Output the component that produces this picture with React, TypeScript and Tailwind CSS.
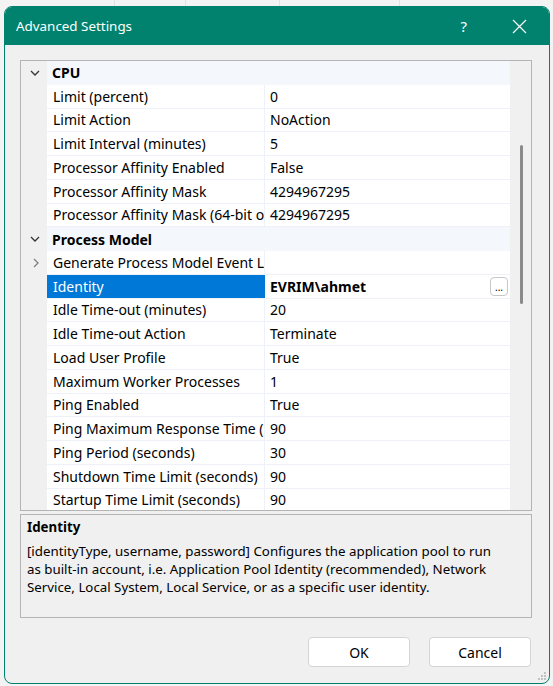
import React from "react";

type Row =
  | { kind: "cat"; name: string }
  | { kind: "prop"; name: string; value: string; expandable?: boolean; selected?: boolean };

const rows: Row[] = [
  { kind: "cat", name: "CPU" },
  { kind: "prop", name: "Limit (percent)", value: "0" },
  { kind: "prop", name: "Limit Action", value: "NoAction" },
  { kind: "prop", name: "Limit Interval (minutes)", value: "5" },
  { kind: "prop", name: "Processor Affinity Enabled", value: "False" },
  { kind: "prop", name: "Processor Affinity Mask", value: "4294967295" },
  { kind: "prop", name: "Processor Affinity Mask (64-bit option)", value: "4294967295" },
  { kind: "cat", name: "Process Model" },
  { kind: "prop", name: "Generate Process Model Event Log Entry", value: "", expandable: true },
  { kind: "prop", name: "Identity", value: "EVRIM\\ahmet", selected: true },
  { kind: "prop", name: "Idle Time-out (minutes)", value: "20" },
  { kind: "prop", name: "Idle Time-out Action", value: "Terminate" },
  { kind: "prop", name: "Load User Profile", value: "True" },
  { kind: "prop", name: "Maximum Worker Processes", value: "1" },
  { kind: "prop", name: "Ping Enabled", value: "True" },
  { kind: "prop", name: "Ping Maximum Response Time (seconds)", value: "90" },
  { kind: "prop", name: "Ping Period (seconds)", value: "30" },
  { kind: "prop", name: "Shutdown Time Limit (seconds)", value: "90" },
  { kind: "prop", name: "Startup Time Limit (seconds)", value: "90" },
];

function ChevronDown() {
  return (
    <svg width="10" height="6" viewBox="0 0 10 6" fill="none">
      <path d="M1 1l4 4 4-4" stroke="#333" strokeWidth="1.3" />
    </svg>
  );
}

function ChevronRight() {
  return (
    <svg width="6" height="10" viewBox="0 0 6 10" fill="none">
      <path d="M1 1l4 4-4 4" stroke="#808080" strokeWidth="1.3" />
    </svg>
  );
}

function GridRow({ row }: { row: Row }) {
  if (row.kind === "cat") {
    return (
      <div className="flex h-[23.75px] items-center">
        <div className="flex h-full w-[26px] shrink-0 items-center justify-center bg-[#f0f0f0] pl-[2px]">
          <ChevronDown />
        </div>
        <div className="flex h-full flex-1 items-center bg-[#f4f7fb] pl-[5px] font-bold text-black">
          {row.name}
        </div>
      </div>
    );
  }
  return (
    <div className="flex h-[23.75px] items-stretch">
      <div className="flex w-[26px] shrink-0 items-center justify-center bg-[#f0f0f0] pl-[3px]">
        {row.expandable && <ChevronRight />}
      </div>
      <div
        className={
          row.selected
            ? "flex w-[218px] shrink-0 items-center overflow-hidden whitespace-nowrap border-b border-[#f0f4f9] bg-[#0078d7] pl-[6px] text-white"
            : "flex w-[218px] shrink-0 items-center overflow-hidden whitespace-nowrap border-b border-r border-[#eef2f8] bg-white pl-[6px] text-black"
        }
      >
        {row.name}
      </div>
      <div className="relative flex flex-1 items-center border-b border-[#eef2f8] bg-white pl-[5px] text-black">
        <span className={row.selected ? "font-bold" : ""}>{row.value}</span>
        {row.selected && (
          <div className="absolute right-[2px] top-[2px] flex h-[19px] w-[18px] items-end justify-center rounded-[4px] border border-[#c8c8c8] bg-white pb-[3px] text-[10px] leading-none">
            ...
          </div>
        )}
      </div>
    </div>
  );
}

export default function App() {
  return (
    <div className="relative h-[686px] w-[553px] overflow-hidden bg-[#f3f3f3] font-['Noto_Sans',sans-serif] text-[14px]">
      <div className="absolute left-0 top-0 flex h-[6px] w-full">
        <div className="w-[115px] border-r border-[#e2e2e2]" />
        <div className="w-[71px] border-r border-[#e2e2e2]" />
        <div className="w-[94px] border-r border-[#e2e2e2]" />
        <div className="w-[120px] border-r border-[#e2e2e2]" />
      </div>
      <div className="ml-[4px] mt-[6px] flex h-[678px] w-[546px] flex-col overflow-hidden rounded-[8px] border border-[#00826f] bg-[#f0f0f0]">
        {/* title bar */}
        <div className="flex h-[38px] shrink-0 items-center bg-[#00826f] pl-[11px] text-white">
          <span className="text-[13.4px]">Advanced Settings</span>
          <span className="ml-auto mr-[45px] text-[15px]">?</span>
          <svg className="mr-[22px]" width="15" height="15" viewBox="0 0 15 15" fill="none">
            <path d="M1 1l13 13M14 1L1 14" stroke="white" strokeWidth="1.2" />
          </svg>
        </div>

        <div className="flex flex-1 flex-col pl-[15px] pt-[15px]">
          {/* property grid */}
          <div className="flex h-[451px] w-[512px] border border-[#b4b4b4] bg-[#f0f0f0]">
            <div className="flex-1 overflow-hidden">
              {rows.map((r, i) => (
                <GridRow key={i} row={r} />
              ))}
            </div>
            <div className="relative w-[21px] shrink-0 bg-[#f0f0f0]">
              <div className="absolute left-[10px] top-[84px] h-[159px] w-[3px] rounded-full bg-[#8a8a8a]" />
            </div>
          </div>

          {/* description */}
          <div className="mt-[3px] h-[104px] w-[512px] border border-[#b4b4b4] bg-[#f0f0f0] px-[6px] pt-[3px] text-[13.3px] leading-[18px] text-black">
            <div className="font-bold">Identity</div>
            <div className="mt-[6px] whitespace-nowrap">
              [identityType, username, password] Configures the application pool to run
            </div>
            <div className="whitespace-nowrap">
              as built-in account, i.e. Application Pool Identity (recommended), Network
            </div>
            <div className="whitespace-nowrap">
              Service, Local System, Local Service, or as a specific user identity.
            </div>
          </div>

          {/* buttons */}
          <div className="mt-[19px] flex w-[511px] justify-end gap-[19px]">
            <button
              type="button"
              className="h-[30px] w-[102px] rounded-[4px] border border-[#d4d4d4] bg-white text-[14px] text-black"
            >
              OK
            </button>
            <button
              type="button"
              className="h-[30px] w-[102px] rounded-[4px] border border-[#d4d4d4] bg-white text-[14px] text-black"
            >
              Cancel
            </button>
          </div>
        </div>
      </div>
      {/* resize grip */}
      <svg className="absolute bottom-[5px] right-[6px]" width="10" height="10" viewBox="0 0 10 10">
        <rect x="7" y="1" width="2" height="2" fill="#c0c0c0" />
        <rect x="4" y="4" width="2" height="2" fill="#c0c0c0" />
        <rect x="7" y="4" width="2" height="2" fill="#c0c0c0" />
        <rect x="1" y="7" width="2" height="2" fill="#c0c0c0" />
        <rect x="4" y="7" width="2" height="2" fill="#c0c0c0" />
        <rect x="7" y="7" width="2" height="2" fill="#c0c0c0" />
      </svg>
    </div>
  );
}
